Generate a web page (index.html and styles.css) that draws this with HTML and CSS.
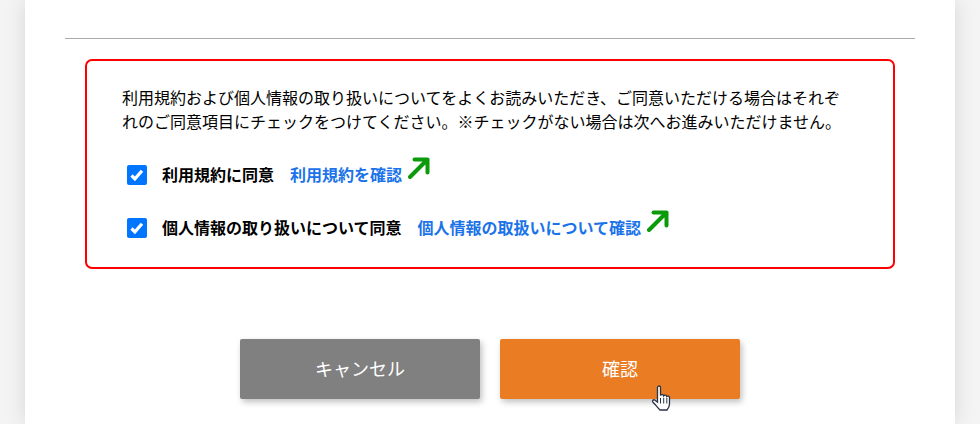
FILE: index.html
```html
<!DOCTYPE html>
<html lang="ja">
<head>
    <meta charset="UTF-8">
    <meta name="viewport" content="width=device-width, initial-scale=1.0">
    <title>同意確認</title>
    <link rel="stylesheet" href="styles.css">
</head>
<body>
    <main class="card">
        <hr class="divider">
        <section class="agree-box">
            <p class="agree-text">利用規約および個人情報の取り扱いについてをよくお読みいただき、ご同意いただける場合はそれぞれのご同意項目にチェックをつけてください。※チェックがない場合は次へお進みいただけません。</p>
            <div class="agree-row">
                <span class="check">
                    <svg viewBox="0 0 20 20" width="20" height="20"><path d="M4.500 10.500l3.400 3.400L15 5.800" fill="none" stroke="#fff" stroke-width="3.200"/></svg>
                </span>
                <span class="agree-label">利用規約に同意</span>
                <a class="agree-link" href="#">利用規約を確認</a>
                <svg class="arrow" viewBox="0 0 22 22" width="22" height="22"><path d="M2 20L19.500 2.500M6.500 2.500h13v13" fill="none" stroke="#0a9a0a" stroke-width="4" stroke-linecap="round" stroke-linejoin="round"/></svg>
            </div>
            <div class="agree-row">
                <span class="check">
                    <svg viewBox="0 0 20 20" width="20" height="20"><path d="M4.500 10.500l3.400 3.400L15 5.800" fill="none" stroke="#fff" stroke-width="3.200"/></svg>
                </span>
                <span class="agree-label">個人情報の取り扱いについて同意</span>
                <a class="agree-link" href="#">個人情報の取扱いについて確認</a>
                <svg class="arrow" viewBox="0 0 22 22" width="22" height="22"><path d="M2 20L19.500 2.500M6.500 2.500h13v13" fill="none" stroke="#0a9a0a" stroke-width="4" stroke-linecap="round" stroke-linejoin="round"/></svg>
            </div>
        </section>
        <div class="buttons">
            <button class="btn btn-cancel" type="button">キャンセル</button>
            <button class="btn btn-ok" type="button">確認</button>
            <svg class="cursor" viewBox="0 0 20 27" width="20" height="27"><path d="M6.500 2.500c0-2 3-2 3 0v8c.7-1.400 3-1.200 3.200.4.8-1.200 2.900-.9 3.100.6.9-.8 2.700-.4 2.700 1.100v6.400c0 2.500-1.200 4.500-2.500 6H9c-1.300-1.300-2.700-3-4.200-4.800L1.800 17c-1-1.400.9-3 2.300-1.800l2.400 2z" fill="#fff" stroke="#2b3347" stroke-width="1.300"/><path d="M9.500 13v5.500M12.700 13v5.500M15.800 13v5.500" stroke="#2b3347" stroke-width="1"/></svg>
        </div>
    </main>
</body>
</html>
```
FILE: styles.css
```css
html, body {
    margin: 0;
    padding: 0;
    height: 424px;
    overflow: hidden;
}
body {
    background: #f4f4f4;
    font-family: "Noto Sans CJK JP", "Noto Sans", sans-serif;
    color: #000;
}
.card {
    width: 930px;
    height: 424px;
    margin-left: 25px;
    padding: 38px 40px 0;
    box-sizing: border-box;
    background: #fff;
    box-shadow: 0 0 20px rgba(0, 0, 0, 0.12);
}
.divider {
    margin: 0;
    border: 0;
    border-top: 1px solid #aaa;
}
.agree-box {
    width: 810px;
    height: 210px;
    box-sizing: border-box;
    margin: 20px 0 0 20px;
    padding: 24px 45px 0 35px;
    border: 2px solid #f00;
    border-radius: 7px;
}
.agree-text {
    margin: 0 0 16px;
    font-size: 16px;
    line-height: 24px;
}
.agree-row {
    display: flex;
    align-items: center;
    height: 52px;
    padding-left: 5px;
    font-size: 16px;
    font-weight: bold;
}
.agree-row + .agree-row {
    margin-top: 1px;
}
.check {
    width: 20px;
    height: 20px;
    margin-right: 15px;
    background: #0075ff;
    border-radius: 2px;
}
.check svg {
    display: block;
}
.agree-label {
    margin: 0 16px 2px 0;
}
.agree-link {
    margin-bottom: 2px;
    color: #1a73e8;
    text-decoration: none;
}
.arrow {
    margin: -14px 0 0 6px;
}
.buttons {
    position: relative;
    display: flex;
    justify-content: center;
    gap: 20px;
    margin-top: 70px;
}
.btn {
    width: 240px;
    height: 60px;
    padding: 0 0 3px;
    border: 0;
    border-radius: 2px;
    color: #fff;
    font-family: inherit;
    font-size: 18px;
    box-shadow: 2px 3px 6px rgba(0, 0, 0, 0.25);
}
.btn-cancel {
    background: #808080;
}
.btn-ok {
    background: #ea7d24;
}
.cursor {
    position: absolute;
    left: 586px;
    top: 46px;
}
```
